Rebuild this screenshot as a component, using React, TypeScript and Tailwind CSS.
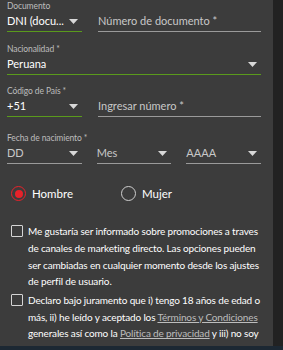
import React from 'react'

function Caret() {
  return (
    <svg width="9" height="5" viewBox="0 0 9 5" className="shrink-0">
      <path d="M0 0h9L4.5 5z" fill="#d8d8d8" />
    </svg>
  )
}

interface FieldProps {
  value: string
  active?: boolean
  placeholder?: boolean
  caret?: boolean
  className?: string
}

function Field({ value, active, placeholder, caret, className }: FieldProps) {
  return (
    <div
      className={`flex h-[20px] items-center justify-between border-b pr-1 ${
        active ? 'border-[#5a9a1c]' : 'border-[#9a9a9a]'
      } ${className ?? ''}`}
    >
      <span
        className={`whitespace-nowrap text-[11px] ${
          placeholder ? 'text-[#c8c8c8]' : 'text-white'
        }`}
      >
        {value}
      </span>
      {caret && <Caret />}
    </div>
  )
}

function Label({ children }: { children: React.ReactNode }) {
  return <div className="text-[8.5px] leading-[11px] tracking-[-0.1px] text-[#bdbdbd]">{children}</div>
}

function Check() {
  return <div className="mt-[2px] h-[12px] w-[12px] shrink-0 rounded-[1px] border-[1.5px] border-[#d5d5d5]" />
}

export default function App() {
  return (
    <div className="flex h-[350px] w-[283px] flex-col overflow-hidden bg-[#222222] font-['Lato',sans-serif]">
      <div className="flex min-h-0 flex-1">
        <div className="w-[273px] overflow-hidden bg-[#3c3c3c] pl-[7px] pr-[12px] pt-[1px]">
          <Label>Documento</Label>
          <div className="flex items-end gap-[16px]">
            <Field value="DNI (docu..." active caret className="w-[75px]" />
            <Field value="Número de documento *" placeholder className="flex-1" />
          </div>

          <div className="mt-[12px]">
            <Label>Nacionalidad *</Label>
            <Field value="Peruana" active caret />
          </div>

          <div className="mt-[11px]">
            <Label>Código de País *</Label>
            <div className="flex items-end gap-[16px]">
              <Field value="+51" active caret className="w-[75px]" />
              <Field value="Ingresar número *" placeholder className="flex-1" />
            </div>
          </div>

          <div className="mt-[16px]">
            <Label>Fecha de nacimiento *</Label>
            <div className="flex gap-[15px]">
              <Field value="DD" placeholder caret className="flex-1" />
              <Field value="Mes" placeholder caret className="flex-1" />
              <Field value="AAAA" placeholder caret className="flex-1" />
            </div>
          </div>

          <div className="mt-[21px] flex items-center pl-[4px]">
            <div className="flex w-[110px] items-center gap-[6px]">
              <div className="flex h-[15px] w-[15px] items-center justify-center rounded-full border-[1.5px] border-[#e8222a]">
                <div className="h-[8px] w-[8px] rounded-full bg-[#e8222a]" />
              </div>
              <span className="text-[11.5px] text-white">Hombre</span>
            </div>
            <div className="flex items-center gap-[6px]">
              <div className="h-[15px] w-[15px] rounded-full border-[1.5px] border-[#cfcfcf]" />
              <span className="text-[11.5px] text-white">Mujer</span>
            </div>
          </div>

          <div className="mt-[21px] flex gap-[5px] pl-[4px]">
            <Check />
            <p className="text-[10px] leading-[16.7px] tracking-[-0.15px] text-white">
              Me gustaría ser informado sobre promociones a traves de canales de marketing directo. Las opciones pueden ser cambiadas en cualquier momento desde los ajustes de perfil de usuario.
            </p>
          </div>

          <div className="mt-[2px] flex gap-[5px] pl-[4px]">
            <Check />
            <p className="text-[10px] leading-[16.7px] tracking-[-0.15px] text-white">
              Declaro bajo juramento que i) tengo 18 años de edad o más, ii) he leído y aceptado los{' '}
              <span className="text-[#bdbdbd] underline">Términos y Condiciones</span> generales así como la{' '}
              <span className="text-[#bdbdbd] underline">Política de privacidad</span> y iii) no soy una Persona Expuesta Políticamente (PEP).
            </p>
          </div>
        </div>
      </div>
      <div className="h-[4px] shrink-0 bg-[#1c2833]" />
    </div>
  )
}
